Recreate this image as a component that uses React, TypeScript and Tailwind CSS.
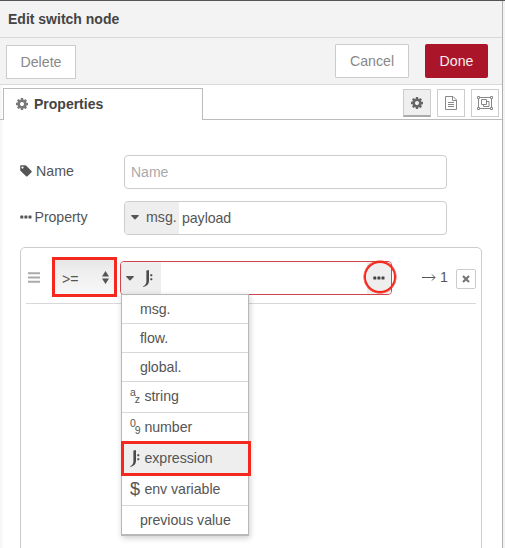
import React from "react";

function Cog({ className }: { className: string }) {
  return (
    <svg viewBox="128 128 1536 1536" className={className} fill="currentColor">
      <path d="M1152 896q0-106-75-181t-181-75-181 75-75 181 75 181 181 75 181-75 75-181zm512-109v222q0 12-8 23t-20 13l-185 28q-19 54-39 91 35 50 107 138 10 12 10 25t-9 23q-27 37-99 108t-94 71q-12 0-26-9l-138-108q-44 23-91 38-16 136-29 186-7 28-36 28h-222q-14 0-24.5-8.5t-11.5-21.5l-28-184q-49-16-90-37l-141 107q-10 9-25 9-14 0-25-11-126-114-165-168-7-10-7-23 0-12 8-23 15-21 51-66.5t54-70.5q-27-50-41-99l-183-27q-13-2-21-12.5t-8-23.5v-222q0-12 8-23t19-13l186-28q14-46 39-92-40-57-107-138-10-12-10-24 0-10 9-23 26-36 98.5-107.5t94.5-71.5q13 0 26 10l138 107q44-23 91-38 16-136 29-186 7-28 36-28h222q14 0 24.5 8.5t11.5 21.5l28 184q49 16 90 37l142-107q9-9 24-9 13 0 25 10 129 119 165 170 7 8 7 22 0 12-8 23-15 21-51 66.5t-54 70.5q26 50 41 98l183 28q13 2 21 12.5t8 23.5z" />
    </svg>
  );
}

function Dots() {
  return (
    <svg viewBox="0 0 12 4" className="h-1 w-3 shrink-0" fill="currentColor">
      <rect x="0.3" y="0.5" width="3" height="3" rx="0.5" />
      <rect x="4.4" y="0.5" width="3" height="3" rx="0.5" />
      <rect x="8.5" y="0.5" width="3" height="3" rx="0.5" />
    </svg>
  );
}

function Tag() {
  return (
    <svg viewBox="0 0 12 12" className="h-3 w-3 shrink-0" fill="currentColor">
      <path
        fillRule="evenodd"
        d="M1 .2h4q.7 0 1.3.6l5.2 5.1q.6.7 0 1.4l-4 4q-.7.6-1.4 0L.9 6.2Q.2 5.500 .2 4.900V1Q.2.2 1 .2ZM2.500 1.500a1 1 0 1 0 .01 0Z"
      />
    </svg>
  );
}

function Caret() {
  return (
    <svg viewBox="0 0 8 5" className="h-[5px] w-2 shrink-0" fill="currentColor">
      <path d="M.6 0h6.800q.8.2.3.900L4.500 4.200q-.5.5-1 0L.3.900Q-.2.2.6 0Z" />
    </svg>
  );
}

function Jsonata() {
  return (
    <svg viewBox="0 0 10 17" className="h-[17px] w-2.5 shrink-0" fill="#4a4a4a">
      <path d="M3.100.8 6 .1V11Q6 15.500.300 16.900L.1 16.300Q3.400 14.800 3.400 11.500V1.600Z" />
      <rect x="7.300" y="4.200" width="2" height="2" rx=".4" />
      <rect x="7.300" y="8.200" width="2" height="2" rx=".4" />
    </svg>
  );
}

function DocIcon() {
  return (
    <svg viewBox="0 0 12 14" className="h-3.5 w-3" fill="none" stroke="currentColor">
      <path d="M.5.5H8l3.500 3.500v9.500H.5ZM7.500.5V4.500h4M3 6.500h6M3 8.500h6M3 10.500h6" />
    </svg>
  );
}

function GroupIcon() {
  return (
    <svg viewBox="0 0 16 14" className="h-3.5 w-4" fill="none" stroke="currentColor">
      <path d="M2.500 1.500h11M2.500 12.500h11M1.500 2.500v9M14.500 2.500v9" />
      <path d="M.5.5h2v2h-2ZM13.500.5h2v2h-2ZM.5 11.500h2v2h-2ZM13.500 11.500h2v2h-2Z" />
      <path d="M4.500 3.500h5v5h-5ZM9.500 5.500h2.500v5H6.500v-2" />
    </svg>
  );
}

const items = [
  { label: "msg.", icon: "", height: "h-[29px]" },
  { label: "flow.", icon: "", height: "h-[29px]" },
  { label: "global.", icon: "", height: "h-[29px]" },
  { label: "string", icon: "az", height: "h-[31px]" },
  { label: "number", icon: "09", height: "h-[31px]" },
  { label: "expression", icon: "j", height: "h-[31px]" },
  { label: "env variable", icon: "$", height: "h-[31px]" },
  { label: "previous value", icon: "", height: "h-[28px]" },
];

function TypeIcon({ icon }: { icon: string }) {
  if (icon === "j") return <Jsonata />;
  if (icon === "$") return <span className="text-[18px] leading-none">$</span>;
  return (
    <span className="flex text-[10.5px] leading-none">
      <span className="-mt-px">{icon[0]}</span>
      <span className="mt-[6px] -ml-px -mr-1">{icon[1]}</span>
    </span>
  );
}

function TypeMenu() {
  return (
    <div className="absolute top-[32px] left-0 z-10 w-[128px] border border-b-2 border-[#b8b8b8] bg-white tracking-[-0.04px] shadow-[1px_2px_6px_rgba(0,0,0,0.2)]">
      {items.map((it) => (
        <div
          key={it.label}
          className={`relative flex items-center border-b border-[#d8d8d8] last:border-b-0 ${it.height} ${
            it.icon ? "pb-[2px] pl-2" : "pl-[18px]"
          } ${it.icon === "j" ? "bg-[#eee]" : ""}`}
        >
          {it.icon && (
            <span className="flex w-[14.5px] shrink-0 items-center">
              <TypeIcon icon={it.icon} />
            </span>
          )}
          <span className="whitespace-nowrap">{it.label}</span>
          {it.icon === "j" && (
            <span className="absolute -top-[3px] -right-[3px] -bottom-[2px] -left-px border-[3px] border-[#f4281c]" />
          )}
        </div>
      ))}
    </div>
  );
}

export default function App() {
  return (
    <div className="flex h-[548px] w-[505px] flex-col overflow-hidden border-t border-[#555] bg-[#f3f3f3] font-['Liberation_Sans',Arial,sans-serif] text-[14.2px] leading-5 text-[#555]">
      <div className="flex h-[547px] w-[503px] flex-col border-r border-[#b0b0b0] bg-white bg-linear-to-r from-[#f4f4f4] to-white to-[4px]">
        <header className="flex h-[37px] shrink-0 items-center border-b border-[#d9d9d9] bg-[#f3f3f3] pl-2 text-[14px] font-bold text-[#444]">
          Edit switch node
        </header>
        <div className="flex h-[47px] shrink-0 items-start border-b border-[#d9d9d9] bg-[#f3f3f3] pt-1.5 pr-3.5 pl-1.5 text-[#888]">
          <button className="mt-px h-[34px] w-[70px] border border-[#ccc] bg-white">Delete</button>
          <button className="ml-auto h-[34px] w-[74px] rounded-[1px] border border-[#ccc] bg-white">Cancel</button>
          <button className="ml-4 h-[34px] w-[63px] rounded-[2px] bg-[#ab1529] text-[#f4eeee]">Done</button>
        </div>

        <div className="flex h-[35px] shrink-0 items-end">
          <div className="h-px w-[3px] bg-[#bbb]" />
          <div className="flex h-8 w-[200px] items-center border-x border-t border-[#bbb] bg-white pb-0.5 pl-3 text-[14px] font-bold text-[#444]">
            <Cog className="mr-1.5 h-3 w-3 text-[#777]" />
            Properties
          </div>
          <div className="flex h-[31px] flex-1 justify-end gap-1.5 border-b border-[#bbb] pr-[3px] text-[#888]">
            <div className="flex h-7 w-7 items-center justify-center border border-b-2 border-[#ccc] border-b-[#aaa] bg-[#efefef] text-[#666]">
              <Cog className="h-3 w-3" />
            </div>
            <div className="flex h-7 w-7 items-center justify-center border border-[#ccc]">
              <DocIcon />
            </div>
            <div className="flex h-7 w-7 items-center justify-center border border-[#ccc]">
              <GroupIcon />
            </div>
          </div>
        </div>

        <main className="flex min-h-0 flex-1 flex-col pt-[35px] pl-5">
          <div className="flex h-[34px] shrink-0">
            <label className="flex w-[104px] items-center gap-1 pb-0.5">
              <Tag />
              Name
            </label>
            <div className="flex w-[323px] items-center rounded-[4px] border border-[#ccc] bg-white pl-1.5 text-[14px] text-[#aaa]">
              Name
            </div>
          </div>
          <div className="mt-3 flex h-[34px] shrink-0">
            <label className="flex w-[104px] items-center gap-[2.5px] pb-0.5 tracking-[-0.08px]">
              <Dots />
              Property
            </label>
            <div className="flex w-[323px] overflow-hidden rounded-[4px] border border-[#ccc] bg-white">
              <div className="flex w-[54px] items-center gap-[7px] bg-[#eee] pl-1.5 pb-0.5">
                <Caret />
                msg.
              </div>
              <span className="pt-1.5 pl-[3px] tracking-[-0.08px]">payload</span>
            </div>
          </div>

          <section className="mt-3 h-[320px] w-[462px] shrink-0 rounded-[5px] border border-[#ccc] bg-white px-[5px] pt-[9px]">
            <div className="flex h-[47px] items-start border-b border-[#d8d8d8]">
              <svg viewBox="0 0 12 11" className="mt-[15px] mr-3 ml-0.5 h-[11px] w-3 shrink-0" fill="#aaa">
                <path d="M0 .2h12v2H0ZM0 4.500h12v2H0ZM0 8.800h12v2H0Z" />
              </svg>
              <div className="flex h-10 w-[65px] items-center justify-between border-[3px] border-[#f4281c] bg-linear-to-b from-[#e6e6e6] via-[#eeeeee] via-30% to-[#f7f7f7] pt-[3px] pr-[5px] pl-[7px]">
                <span>&gt;=</span>
                <svg viewBox="0 0 7 13" className="mb-0.5 h-[13px] w-[7px]" fill="#555">
                  <path d="M3.500 0 7 5.500H0ZM0 7.500h7L3.500 13Z" />
                </svg>
              </div>
              <div className="relative mt-1 ml-[3px] h-[34px] w-[273px] rounded-[4px] border border-[#d3434b] bg-white">
                <div className="flex h-8 w-10 items-center gap-[9px] rounded-l-[3px] bg-[#eee] pl-[5px]">
                  <Caret />
                  <Jsonata />
                </div>
                <div className="absolute top-0 right-0 flex h-8 w-6 items-center justify-center rounded-r-[3px] bg-[#eee] text-[#444]">
                  <Dots />
                </div>
                <span className="absolute -top-px -right-[5px] h-8 w-8 rounded-full border-[2.5px] border-[#f4281c] shadow-[0_0_0_0.5px_#f4281c]" />
                <TypeMenu />
              </div>
              <div className="mt-[10px] ml-[30px] flex items-center gap-[4px]">
                <svg viewBox="0 0 14 7" className="mt-px h-[7px] w-3.5" fill="none" stroke="currentColor">
                  <path d="M0 3.500h13M10 .5 13 3.500 10 6.500" />
                </svg>
                <span>1</span>
              </div>
              <button className="mt-3 ml-[8px] flex h-5 w-5 shrink-0 items-center justify-center rounded-[2px] border border-[#ccc] bg-white">
                <svg viewBox="0 0 8 8" className="h-2 w-2" stroke="#777" strokeWidth="2.2">
                  <path d="M1 1l6 6M7 1 1 7" />
                </svg>
              </button>
            </div>
          </section>
        </main>
      </div>
    </div>
  );
}
